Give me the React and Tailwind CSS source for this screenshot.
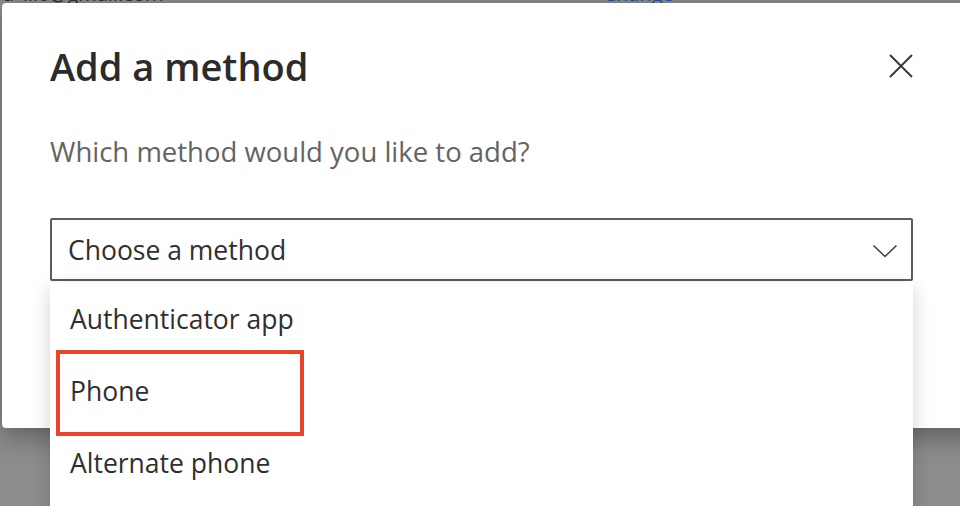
import React from 'react';

const font = { fontFamily: '"Open Sans", "Noto Sans", sans-serif' };

const Chevron = () => (
  <svg width="26" height="16" viewBox="0 0 26 16" fill="none">
    <path d="M1.5 2.5 L13 13.5 L24.5 2.5" stroke="#444" strokeWidth="1.6" />
  </svg>
);

const CloseX = () => (
  <svg width="26" height="26" viewBox="0 0 26 26" fill="none">
    <path d="M2 2 L24 24 M24 2 L2 24" stroke="#3a3a3a" strokeWidth="2" />
  </svg>
);

const App = () => {
  const items = ['Authenticator app', 'Phone', 'Alternate phone'];

  return (
    <div className="w-[960px] h-[506px] overflow-hidden bg-[#8d8d8d]" style={font}>
      {/* page behind the backdrop, mostly hidden */}
      <div className="h-[3px] overflow-hidden">
        <div className="flex -mt-[18px] text-[20px] leading-[24px]">
          <span className="pl-[2px] text-[#2a2a2a]">d_lil0@gmail.com</span>
          <span className="ml-[440px] text-[#1f4e8c]">Change</span>
        </div>
      </div>

      <div className="ml-[2px] w-[1000px] h-[425px] bg-white rounded-[4px] shadow-[0_8px_28px_rgba(0,0,0,0.35)] pl-[48px] pt-[40px]">
        <div className="w-[863px] flex items-center justify-between">
          <h1 className="text-[38px] leading-[46px] font-semibold text-[#2b2b2b]">Add a method</h1>
          <button className="w-[26px] h-[26px] flex items-center justify-center -mr-[1px]">
            <CloseX />
          </button>
        </div>

        <p className="mt-[47px] text-[27.5px] leading-[32px] text-[#646464]">Which method would you like to add?</p>

        <div className="relative mt-[50px] w-[863px]">
          <div className="h-[63px] border-2 border-[#5c5c5c] rounded-[2px] flex items-center justify-between pl-[16px] pr-[13px] pt-[2px]">
            <span className="text-[26.5px] text-[#2f2f2f]">Choose a method</span>
            <Chevron />
          </div>

          <div className="absolute left-0 top-[64px] w-[863px] bg-white pt-[2px] pb-[40px] shadow-[0_6px_18px_rgba(0,0,0,0.18)] z-10">
            {items.map((item) => (
              <div key={item} className="relative h-[72px] flex items-center pl-[20px] text-[26.5px] text-[#2f2f2f]">
                {item}
                {item === 'Phone' && (
                  <div className="absolute left-[6px] top-[-6px] w-[248px] h-[86px] border-[4px] border-[#e8442a]" />
                )}
              </div>
            ))}
          </div>
        </div>
      </div>
    </div>
  );
};

export default App;
